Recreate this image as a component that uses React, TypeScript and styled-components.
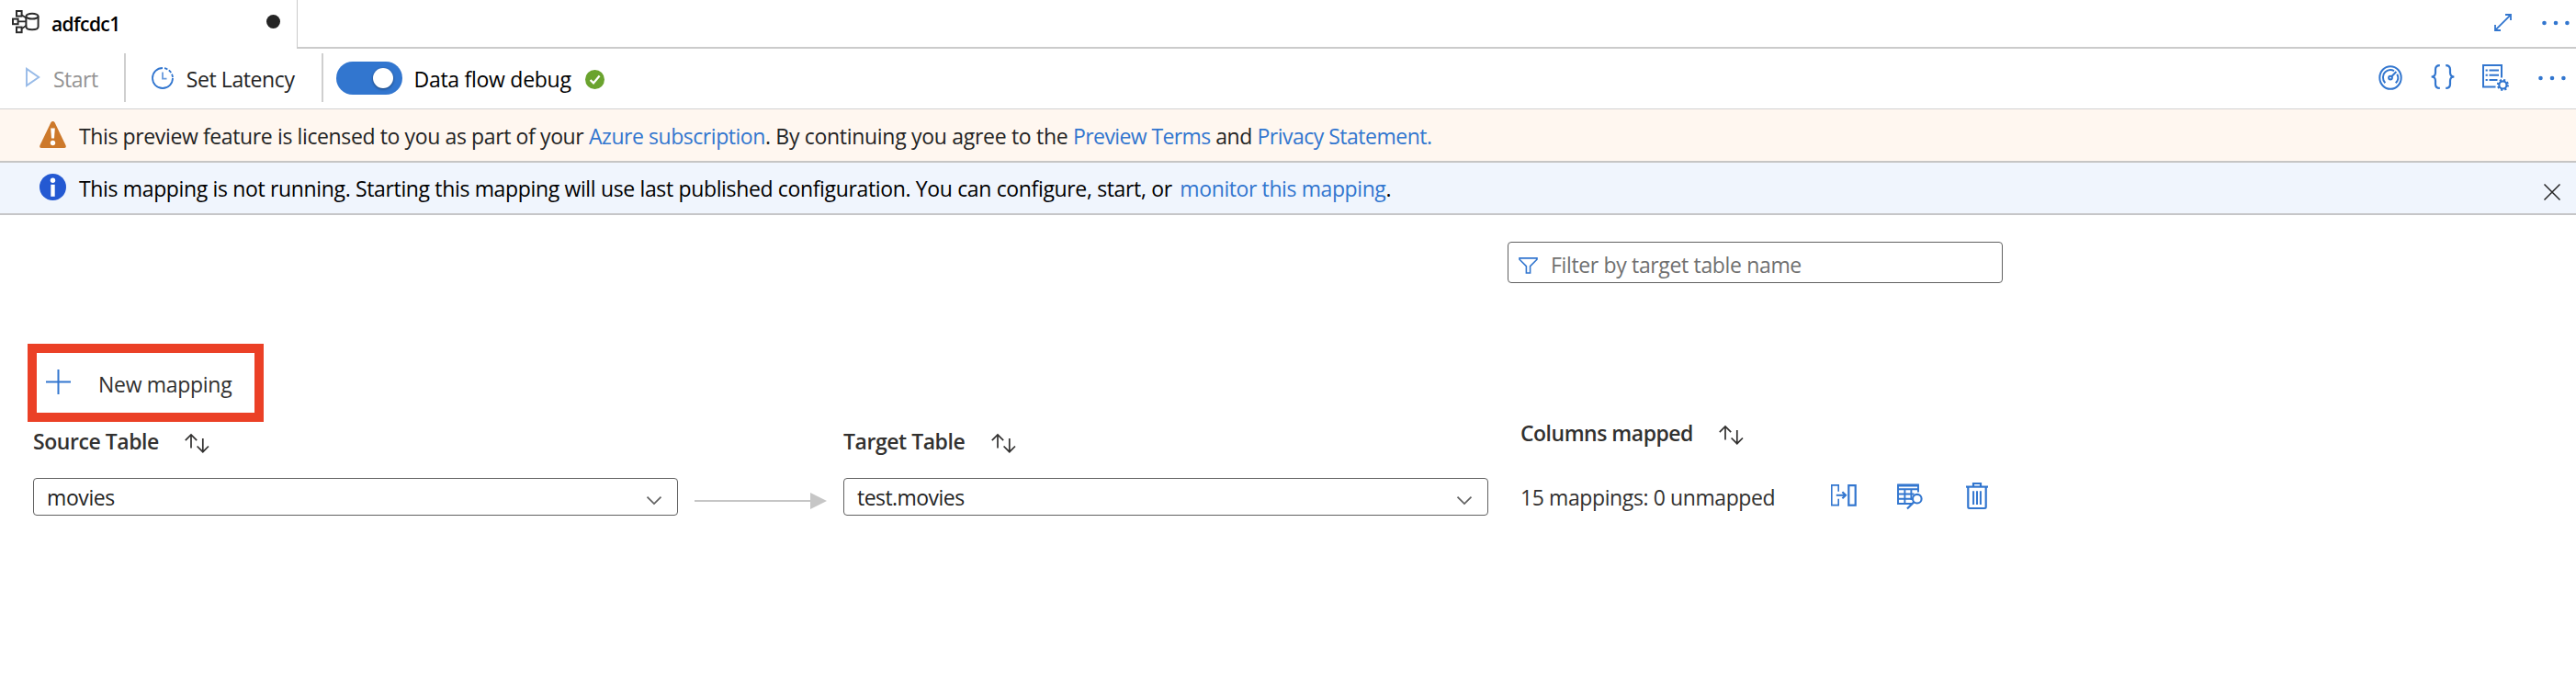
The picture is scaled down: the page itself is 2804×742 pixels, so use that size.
import React from "react";
import styled, { createGlobalStyle } from "styled-components";

const BLUE = "#3276cf";
const LINE = "#cbcbcb";
const INK = "#323130";

const GlobalStyle = createGlobalStyle`
  *, *::before, *::after { box-sizing: border-box; }
  body { margin: 0; background: #fff; }
  svg { display: block; flex: none; overflow: visible; }
  button { font: inherit; letter-spacing: inherit; color: inherit; background: none; border: 0; padding: 0; }
`;

const Page = styled.div`
  width: 2804px;
  height: 742px;
  overflow: hidden;
  background: #fff;
  color: ${INK};
  font-family: "Open Sans", "Noto Sans", sans-serif;
  font-size: 23px;
  line-height: 30px;
  letter-spacing: -0.36px;
  white-space: pre;
`;

const Label = styled.span<{ $x?: number; $y?: number; $track?: number; $color?: string }>`
  flex: none;
  margin-left: ${(p) => p.$x ?? 0}px;
  margin-top: ${(p) => p.$y ?? 0}px;
  letter-spacing: ${(p) => p.$track ?? -0.36}px;
  color: ${(p) => p.$color ?? "inherit"};
`;

const IconSlot = styled.span<{ $x?: number; $y?: number }>`
  flex: none;
  margin-left: ${(p) => p.$x ?? 0}px;
  margin-top: ${(p) => p.$y ?? 0}px;
`;

const TabStrip = styled.header`
  display: flex;
  height: 53px;
`;

const Tab = styled.div`
  display: flex;
  align-items: flex-start;
  width: 324px;
  border-right: 1px solid ${LINE};
  padding-left: 13px;
  /* the active tab stays open towards the toolbar */
`;

const TabTitle = styled.span`
  width: 234px;
  margin: 11px 0 0 13px;
  font-size: 21px;
  font-weight: 600;
  letter-spacing: -0.6px;
  color: #000;
`;

const DirtyDot = styled.span`
  width: 15px;
  height: 15px;
  margin-top: 16px;
  border-radius: 50%;
  background: #242424;
`;

const TabActions = styled.div`
  flex: 1;
  display: flex;
  justify-content: flex-end;
  align-items: flex-start;
  padding-right: 7px;
  border-bottom: 2px solid ${LINE};
`;

const Toolbar = styled.div`
  display: flex;
  align-items: flex-start;
  height: 66px;
  padding-left: 28px;
  border-bottom: 1px solid #d2d2d2;
`;

const ToolbarEnd = styled.div`
  margin-left: auto;
  display: flex;
  align-items: flex-start;
  padding-right: 11px;
`;

const Separator = styled.span<{ $x: number }>`
  width: 2px;
  height: 53px;
  margin: 5px 0 0 ${(p) => p.$x}px;
  background: #cfcfcf;
`;

const Toggle = styled.span`
  display: flex;
  justify-content: flex-end;
  align-items: center;
  width: 72px;
  height: 36px;
  margin: 14px 0 0 14px;
  padding-right: 10px;
  border-radius: 18px;
  background: ${BLUE};
`;

const Knob = styled.span`
  width: 22px;
  height: 22px;
  border-radius: 50%;
  background: #fff;
  box-shadow: 0 1px 3px rgba(0, 0, 0, 0.45);
`;

const Banner = styled.div<{ $tone: "warning" | "info" }>`
  display: flex;
  align-items: flex-start;
  height: ${(p) => (p.$tone === "warning" ? 58 : 57)}px;
  padding-left: 43px;
  border-bottom: 2px solid ${(p) => (p.$tone === "warning" ? "#c6c5c4" : "#c6c6c8")};
  background: ${(p) => (p.$tone === "warning" ? "#fff7f0" : "#f0f5fd")};
  color: ${(p) => (p.$tone === "warning" ? "#242424" : "#000")};
`;

const Link = styled.a<{ $gap?: number; $track?: number }>`
  margin-left: ${(p) => p.$gap ?? 0}px;
  letter-spacing: ${(p) => (p.$track === undefined ? "inherit" : `${p.$track}px`)};
  color: ${BLUE};
`;

const CloseButton = styled.button`
  margin: 23px 17px 0 auto;
`;

const Content = styled.main`
  padding: 29px 0 0 30px;
`;

const FilterBox = styled.div`
  display: flex;
  align-items: flex-start;
  width: 539px;
  height: 45px;
  margin-left: 1611px;
  padding-left: 11px;
  border: 1px solid #616161;
  border-radius: 4px;
`;

const NewMapping = styled.button`
  display: flex;
  align-items: flex-start;
  width: 257px;
  height: 85px;
  margin-top: 66px;
  padding: 18px 0 0 10px;
  border: 10px solid #eb4026;
`;

const Grid = styled.div`
  display: grid;
  grid-template-columns: 882px 737px 600px;
  padding-left: 6px;
`;

const HeaderCell = styled.div<{ $top?: number }>`
  display: flex;
  align-items: flex-start;
  height: ${(p) => 61 - (p.$top ?? 6)}px;
  margin-top: ${(p) => p.$top ?? 6}px;
  font-weight: 600;
`;

const Cell = styled.div`
  display: flex;
  align-items: flex-start;
`;

const Select = styled.div`
  display: flex;
  align-items: flex-start;
  justify-content: space-between;
  width: 702px;
  height: 41px;
  padding: 5px 17px 0 14px;
  border: 1px solid #616161;
  border-radius: 4px;
  color: #242424;
`;

const PipelineIcon = () => (
  <svg width="30" height="26" viewBox="0 0 30 26" fill="none" stroke="#2b2b2b" strokeWidth="2">
    <rect x="5" y="1" width="5.6" height="5.6" />
    <rect x="1" y="9.6" width="5.6" height="5.6" />
    <rect x="5" y="18.6" width="5.6" height="5.6" />
    <path d="M11 5.5 L16 9 M7 12.4 H15.5 M11 20 L16 16.5" strokeWidth="1.7" />
    <ellipse cx="22" cy="6.7" rx="6.6" ry="2.9" />
    <path d="M15.4 6.7 V18 C15.4 22.3 28.6 22.3 28.6 18 V6.7" />
  </svg>
);

const PlayIcon = () => (
  <svg width="16" height="22" viewBox="0 0 16 22" fill="none" stroke="#98bbe8" strokeWidth="1.9">
    <path d="M1 1.9 V20.1 L14.2 11 Z" />
  </svg>
);

const ClockIcon = () => (
  <svg width="24" height="24" viewBox="0 0 24 24" fill="none" stroke={BLUE} strokeWidth="1.8">
    <path d="M12 1 A11 11 0 1 0 23 12" />
    <path d="M14 1.2 A11 11 0 0 1 23 12" strokeDasharray="3.6 1.7" />
    <path d="M12 5.5 V12.6 H16.5" stroke="#6a9bdd" />
  </svg>
);

const CheckIcon = () => (
  <svg width="21" height="21" viewBox="0 0 21 21">
    <circle cx="10.5" cy="10.5" r="10.5" fill="#6aa32e" />
    <path d="M5.6 11 L9 14.4 L15.6 6.6" fill="none" stroke="#fff" strokeWidth="2.3" />
  </svg>
);

const WarningIcon = () => (
  <svg width="29" height="29" viewBox="0 0 29 29">
    <path d="M14.5 0 C15.6 0 16.2 .7 16.7 1.6 L28.5 26 C29.3 27.7 28.6 29 27 29 H2 C.4 29 -.3 27.7 .5 26 L12.3 1.6 C12.8 .7 13.4 0 14.5 0 Z" fill="#cd792b" />
    <path d="M12.2 7.4 H16.8 L16 18.6 H13 Z" fill="#fff" />
    <circle cx="14.5" cy="23.5" r="2.7" fill="#fff" />
  </svg>
);

const InfoIcon = () => (
  <svg width="29" height="29" viewBox="0 0 29 29">
    <circle cx="14.5" cy="14.5" r="14.5" fill="#2459d2" />
    <circle cx="14.5" cy="7.3" r="2.7" fill="#fff" />
    <rect x="12.3" y="11.8" width="4.4" height="13" fill="#fff" />
  </svg>
);

const ExpandIcon = () => (
  <svg width="19" height="19" viewBox="0 0 19 19" fill="none" stroke={BLUE} strokeWidth="1.8">
    <path d="M1.3 17.7 L17.7 1.3 M12 1 H18 V7 M1 12 V18 H7" />
  </svg>
);

const MoreIcon = () => (
  <svg width="30" height="6" viewBox="0 0 30 6" fill={BLUE}>
    <circle cx="2.5" cy="3" r="2.3" />
    <circle cx="15" cy="3" r="2.3" />
    <circle cx="27.4" cy="3" r="2.3" />
  </svg>
);

const GaugeIcon = () => (
  <svg width="26" height="27" viewBox="0 0 26 27" fill="none" stroke={BLUE} strokeWidth="2">
    <ellipse cx="13" cy="13.5" rx="11.7" ry="12.3" />
    <path d="M7.3 19.3 C4 15.8 4.2 10 7.4 7.3 C10.2 4.8 14.2 4.6 17 6.1 M20.3 9.8 C21.9 13 21.4 16.8 18.7 19.3" />
    <path d="M14.3 12.3 L19.4 7" />
    <circle cx="13" cy="13.6" r="1.9" strokeWidth="2" />
  </svg>
);

const BracesIcon = () => (
  <svg width="26" height="27" viewBox="0 0 26 27" fill="none" stroke={BLUE} strokeWidth="2.2">
    <path d="M9.8 1.1 C6 1.1 5 2.6 5 5.6 V9 C5 11.8 4 13.5 .6 13.5 C4 13.5 5 15.2 5 18 V21.4 C5 24.4 6 25.9 9.8 25.9" />
    <path d="M16.2 1.1 C20 1.1 21 2.6 21 5.6 V9 C21 11.8 22 13.5 25.4 13.5 C22 13.5 21 15.2 21 18 V21.4 C21 24.4 20 25.9 16.2 25.9" />
  </svg>
);

const SettingsListIcon = () => (
  <svg width="29" height="29" viewBox="0 0 29 29" fill="none" stroke={BLUE} strokeWidth="2">
    <path d="M21 14.5 V1 H1 V24.5 H14.5" />
    <path d="M7.5 6.6 H18 M7.5 11.8 H18 M7.5 17 H16.5" />
    <path d="M3.6 6.6 H5.8 M3.6 11.8 H5.8 M3.6 17 H5.8" />
    <circle cx="22.4" cy="22.4" r="4.1" strokeWidth="2.2" />
    <circle cx="22.4" cy="22.4" r="5.5" strokeWidth="2.1" strokeDasharray="2.16 2.16" />
  </svg>
);

const CloseIcon = () => (
  <svg width="18" height="18" viewBox="0 0 18 18" fill="none" stroke="#242424" strokeWidth="1.5">
    <path d="M.5 .5 L17.5 17.5 M17.5 .5 L.5 17.5" />
  </svg>
);

const FunnelIcon = () => (
  <svg width="21" height="18" viewBox="0 0 21 18" fill="none" stroke={BLUE} strokeWidth="1.6">
    <path d="M1 .9 H20 V2.2 L12.6 9.6 V17 H8.4 V9.6 L1 2.2 Z" />
  </svg>
);

const PlusIcon = () => (
  <svg width="27" height="27" viewBox="0 0 27 27" fill="none" stroke={BLUE} strokeWidth="2">
    <path d="M13.5 0 V27 M0 13.5 H27" />
  </svg>
);

const SortIcon = () => (
  <svg width="27" height="21" viewBox="0 0 27 21" fill="none" stroke={INK} strokeWidth="1.7">
    <path d="M7 15.5 V1 M.8 7.2 L7 1 L13.2 7.2" />
    <path d="M19.8 5 V19.7 M13.6 13.5 L19.8 19.7 L26 13.5" />
  </svg>
);

const ChevronIcon = () => (
  <svg width="16" height="9" viewBox="0 0 16 9" fill="none" stroke="#616161" strokeWidth="1.7">
    <path d="M.5 .6 L8 8.1 L15.5 .6" />
  </svg>
);

const FlowArrow = () => (
  <svg width="144" height="18" viewBox="0 0 144 18" fill="#c6c6c6">
    <rect x="0" y="8" width="127" height="2" />
    <path d="M126 0 L144 9 L126 18 Z" />
  </svg>
);

const MapColumnsIcon = () => (
  <svg width="28" height="24" viewBox="0 0 28 24" fill="none" stroke={BLUE}>
    <path d="M8.2 7.8 V.9 H.8 V22.6 H8.2 V15.8" strokeWidth="1.6" />
    <rect x="19.3" y="1.1" width="7.4" height="21.6" strokeWidth="2.2" />
    <path d="M5.8 11.8 H15" strokeWidth="2" />
    <path d="M12.4 8.3 L16 11.8 L12.4 15.3" strokeWidth="2.2" />
  </svg>
);

const TablePreviewIcon = () => (
  <svg width="28" height="28" viewBox="0 0 28 28" fill="none" stroke={BLUE} strokeWidth="1.9">
    <path d="M16 22 H1 V1.5 H23 V9.5" />
    <path d="M1 2.2 H23" strokeWidth="2.6" />
    <path d="M1 6.2 H23 M1 11.5 H18.5 M1 16.7 H15.5 M8.4 6 V22 M15.4 6 V18" />
    <circle cx="21.8" cy="16.7" r="4.8" strokeWidth="2.1" />
    <path d="M18.4 20.1 L11 27.5" strokeWidth="2.2" />
  </svg>
);

const TrashIcon = () => (
  <svg width="24" height="29" viewBox="0 0 24 29" fill="none" stroke={BLUE} strokeWidth="2.2">
    <path d="M0 4.6 H24" />
    <path d="M8 4.4 V1 H16 V4.4" />
    <path d="M2.3 5 V26.6 Q2.3 28 3.8 28 H20.2 Q21.7 28 21.7 26.6 V5" />
    <path d="M8.1 9.3 V24 M12 9.3 V24 M15.9 9.3 V24" strokeWidth="2" />
  </svg>
);

export default function App() {
  return (
    <Page>
      <GlobalStyle />
      <TabStrip>
        <Tab>
          <IconSlot $y={11}><PipelineIcon /></IconSlot>
          <TabTitle>adfcdc1</TabTitle>
          <DirtyDot />
        </Tab>
        <TabActions>
          <IconSlot $y={15}><ExpandIcon /></IconSlot>
          <IconSlot $x={33} $y={22}><MoreIcon /></IconSlot>
        </TabActions>
      </TabStrip>

      <Toolbar>
        <IconSlot $y={20}><PlayIcon /></IconSlot>
        <Label $x={14} $y={18} $track={-0.5} $color="#949494">Start</Label>
        <Separator $x={28} />
        <IconSlot $x={28} $y={20}><ClockIcon /></IconSlot>
        <Label $x={14} $y={18} $track={-0.4} $color="#242424">Set Latency</Label>
        <Separator $x={29} />
        <Toggle><Knob /></Toggle>
        <Label $x={13} $y={18} $track={-0.28} $color="#000">Data flow debug</Label>
        <IconSlot $x={15} $y={23}><CheckIcon /></IconSlot>
        <ToolbarEnd>
          <IconSlot $y={18}><GaugeIcon /></IconSlot>
          <IconSlot $x={31} $y={17}><BracesIcon /></IconSlot>
          <IconSlot $x={30} $y={17}><SettingsListIcon /></IconSlot>
          <IconSlot $x={32} $y={29}><MoreIcon /></IconSlot>
        </ToolbarEnd>
      </Toolbar>

      <Banner $tone="warning">
        <IconSlot $y={13}><WarningIcon /></IconSlot>
        <Label $x={14} $y={14} $track={-0.38}>
          This preview feature is licensed to you as part of your <Link $track={-0.45}>Azure subscription</Link>
        </Label>
        <Label $y={14} $track={-0.3}>. By continuing you agree to the </Label>
        <Label $y={14} $track={-0.43}>
          <Link $track={-0.6}>Preview Terms</Link> and <Link $track={-0.5}>Privacy Statement.</Link>
        </Label>
      </Banner>
      <Banner $tone="info">
        <IconSlot $y={12}><InfoIcon /></IconSlot>
        <Label $x={14} $y={13} $track={-0.35}>
          This mapping is not running. Starting this mapping will use last published configuration. You can configure, start, or <Link $gap={3} $track={-0.4}>monitor this mapping</Link>.
        </Label>
        <CloseButton aria-label="Dismiss"><CloseIcon /></CloseButton>
      </Banner>

      <Content>
        <FilterBox>
          <IconSlot $y={16}><FunnelIcon /></IconSlot>
          <Label $x={14} $y={9} $track={-0.35} $color="#707070">Filter by target table name</Label>
        </FilterBox>

        <NewMapping>
          <PlusIcon />
          <Label $x={30} $y={1} $track={-0.3}>New mapping</Label>
        </NewMapping>

        <Grid>
          <HeaderCell>
            <Label $track={-0.45}>Source Table</Label>
            <IconSlot $x={28} $y={7}><SortIcon /></IconSlot>
          </HeaderCell>
          <HeaderCell>
            <Label $track={-0.45}>Target Table</Label>
            <IconSlot $x={29} $y={7}><SortIcon /></IconSlot>
          </HeaderCell>
          <HeaderCell $top={-3}>
            <Label $track={-0.5}>Columns mapped</Label>
            <IconSlot $x={28} $y={7}><SortIcon /></IconSlot>
          </HeaderCell>

          <Cell>
            <Select>
              <Label $track={-0.4}>movies</Label>
              <IconSlot $y={14}><ChevronIcon /></IconSlot>
            </Select>
            <IconSlot $x={18} $y={16}><FlowArrow /></IconSlot>
          </Cell>
          <Cell>
            <Select>
              <Label $track={-0.55}>test.movies</Label>
              <IconSlot $y={14}><ChevronIcon /></IconSlot>
            </Select>
          </Cell>
          <Cell>
            <Label $y={6} $track={-0.4}>15 mappings: 0 unmapped</Label>
            <IconSlot $x={61} $y={7}><MapColumnsIcon /></IconSlot>
            <IconSlot $x={44} $y={6}><TablePreviewIcon /></IconSlot>
            <IconSlot $x={47} $y={5}><TrashIcon /></IconSlot>
          </Cell>
        </Grid>
      </Content>
    </Page>
  );
}
